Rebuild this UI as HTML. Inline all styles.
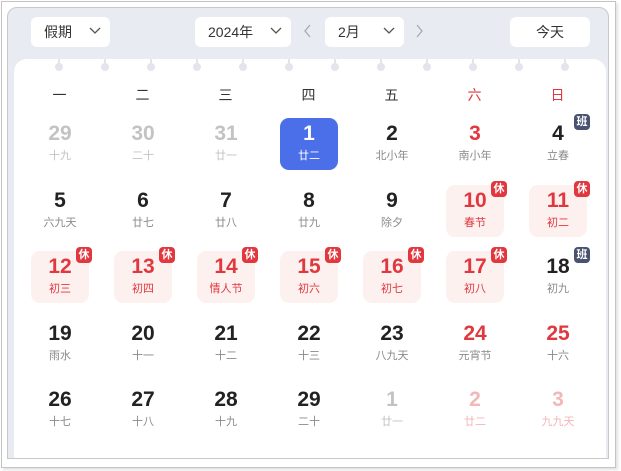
<!DOCTYPE html>
<html><head><meta charset="utf-8"><style>
*{margin:0;padding:0;box-sizing:border-box}
body{width:621px;height:471px;background:#fff;position:relative;overflow:hidden;font-family:"Liberation Sans","Noto Sans CJK SC",sans-serif}
.outer{position:absolute;left:1px;top:1px;width:615px;height:467px;border:1px solid #c4c4c4;box-shadow:2px 2px 3px rgba(0,0,0,.12)}
.inner{position:absolute;left:7px;top:7px;width:602px;height:452px;border:1px solid #c8c8c8;background:#e8ebf2;overflow:hidden;border-radius:10px 10px 0 0}
.card{position:absolute;left:6px;top:51px;width:592px;height:420px;background:#fff;border-radius:13px 13px 0 0}
.sel{position:absolute;height:30px;top:9px;background:#fff;border-radius:6px;font-size:14px;color:#333;line-height:30px;padding-left:13px}
.sel svg{position:absolute;right:9px;top:10px}
.arr{position:absolute;top:16px;color:#aaa}
.pin{position:absolute;top:51px;width:2px;height:6px;background:#e3e5ec}
.pin i{position:absolute;left:-3px;top:4px;width:8px;height:8px;border-radius:50%;background:#e3e5ec}
.wk{position:absolute;top:85px;width:83px;text-align:center;font-size:14px;color:#333}
.c{position:absolute;width:58px;height:52px;text-align:center;border-radius:9px}
.c b{display:block;font-size:21px;font-weight:bold;line-height:22px;margin-top:5px;color:#222}
.c s{display:block;text-decoration:none;font-size:11px;line-height:14px;margin-top:4px;color:#8a8a8a}
.g b,.g s{color:#c3c3c3}
.r b,.r s{color:#e0383e}
.h{background:#fdf1f0}
.p b,.p s{color:#f2b7b9}
.sd{background:#4a6fe8}.sd b,.sd s{color:#fff}
.bd{position:absolute;right:-3px;top:-4px;width:16px;height:16px;border-radius:4px;font-size:11px;line-height:16px;color:#fff;background:#e0383e;font-weight:bold}
.bn{background:#4a5272}
</style></head><body>
<div class="outer"></div>
<div class="inner">
<div class="sel" style="left:23px;width:79px">假期<svg width="12" height="8"><path d="M1 1l5 5 5-5" stroke="#555" fill="none" stroke-width="1.3"/></svg></div>
<div class="sel" style="left:187px;width:96px">2024年<svg width="12" height="8"><path d="M1 1l5 5 5-5" stroke="#555" fill="none" stroke-width="1.3"/></svg></div>
<svg class="arr" style="left:296px" width="8" height="14"><path d="M6 1L1 7l5 6" stroke="#aaa" fill="none" stroke-width="1.3"/></svg>
<div class="sel" style="left:317px;width:79px">2月<svg width="12" height="8"><path d="M1 1l5 5 5-5" stroke="#555" fill="none" stroke-width="1.3"/></svg></div>
<svg class="arr" style="left:407px" width="8" height="14"><path d="M2 1l5 6-5 6" stroke="#aaa" fill="none" stroke-width="1.3"/></svg>
<div class="sel" style="left:502px;width:80px;text-align:center;padding:0">今天</div>
<div class="card"></div>
<div class="pin" style="left:50px"><i></i></div><div class="pin" style="left:96px"><i></i></div><div class="pin" style="left:142px"><i></i></div><div class="pin" style="left:188px"><i></i></div><div class="pin" style="left:234px"><i></i></div><div class="pin" style="left:280px"><i></i></div><div class="pin" style="left:326px"><i></i></div><div class="pin" style="left:372px"><i></i></div><div class="pin" style="left:418px"><i></i></div><div class="pin" style="left:464px"><i></i></div><div class="pin" style="left:510px"><i></i></div><div class="pin" style="left:556px"><i></i></div>
</div>
<div class="wk" style="left:18px">一</div><div class="wk" style="left:101px">二</div><div class="wk" style="left:184px">三</div><div class="wk" style="left:267px">四</div><div class="wk" style="left:350px">五</div><div class="wk" style="left:433px;color:#e0383e">六</div><div class="wk" style="left:516px;color:#e0383e">日</div>

<div class="c g" style="left:31px;top:118px"><b>29</b><s>十九</s></div>
<div class="c g" style="left:114px;top:118px"><b>30</b><s>二十</s></div>
<div class="c g" style="left:197px;top:118px"><b>31</b><s>廿一</s></div>
<div class="c sd" style="left:280px;top:118px"><b>1</b><s>廿二</s></div>
<div class="c" style="left:363px;top:118px"><b>2</b><s>北小年</s></div>
<div class="c r" style="left:446px;top:118px"><b>3</b><s style="color:#8a8a8a">南小年</s></div>
<div class="c" style="left:529px;top:118px"><b>4</b><s>立春</s><span class="bd bn">班</span></div>

<div class="c" style="left:31px;top:185px"><b>5</b><s>六九天</s></div>
<div class="c" style="left:114px;top:185px"><b>6</b><s>廿七</s></div>
<div class="c" style="left:197px;top:185px"><b>7</b><s>廿八</s></div>
<div class="c" style="left:280px;top:185px"><b>8</b><s>廿九</s></div>
<div class="c" style="left:363px;top:185px"><b>9</b><s>除夕</s></div>
<div class="c r h" style="left:446px;top:185px"><b>10</b><s>春节</s><span class="bd">休</span></div>
<div class="c r h" style="left:529px;top:185px"><b>11</b><s>初二</s><span class="bd">休</span></div>

<div class="c r h" style="left:31px;top:251px"><b>12</b><s>初三</s><span class="bd">休</span></div>
<div class="c r h" style="left:114px;top:251px"><b>13</b><s>初四</s><span class="bd">休</span></div>
<div class="c r h" style="left:197px;top:251px"><b>14</b><s>情人节</s><span class="bd">休</span></div>
<div class="c r h" style="left:280px;top:251px"><b>15</b><s>初六</s><span class="bd">休</span></div>
<div class="c r h" style="left:363px;top:251px"><b>16</b><s>初七</s><span class="bd">休</span></div>
<div class="c r h" style="left:446px;top:251px"><b>17</b><s>初八</s><span class="bd">休</span></div>
<div class="c" style="left:529px;top:251px"><b>18</b><s>初九</s><span class="bd bn">班</span></div>

<div class="c" style="left:31px;top:318px"><b>19</b><s>雨水</s></div>
<div class="c" style="left:114px;top:318px"><b>20</b><s>十一</s></div>
<div class="c" style="left:197px;top:318px"><b>21</b><s>十二</s></div>
<div class="c" style="left:280px;top:318px"><b>22</b><s>十三</s></div>
<div class="c" style="left:363px;top:318px"><b>23</b><s>八九天</s></div>
<div class="c r" style="left:446px;top:318px"><b>24</b><s style="color:#8a8a8a">元宵节</s></div>
<div class="c r" style="left:529px;top:318px"><b>25</b><s style="color:#8a8a8a">十六</s></div>

<div class="c" style="left:31px;top:384px"><b>26</b><s>十七</s></div>
<div class="c" style="left:114px;top:384px"><b>27</b><s>十八</s></div>
<div class="c" style="left:197px;top:384px"><b>28</b><s>十九</s></div>
<div class="c" style="left:280px;top:384px"><b>29</b><s>二十</s></div>
<div class="c g" style="left:363px;top:384px"><b>1</b><s>廿一</s></div>
<div class="c p" style="left:446px;top:384px"><b>2</b><s>廿二</s></div>
<div class="c p" style="left:529px;top:384px"><b>3</b><s>九九天</s></div>
</body></html>
